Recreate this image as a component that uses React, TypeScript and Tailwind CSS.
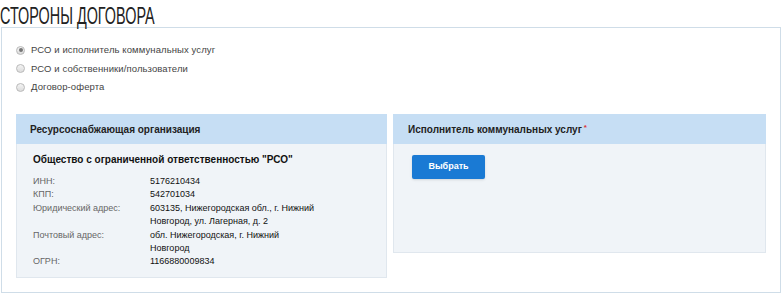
export default function App() {
  const rows = [
    { label: "ИНН:", value: "5176210434" },
    { label: "КПП:", value: "542701034" },
    { label: "Юридический адрес:", value: "603135, Нижегородская обл., г. Нижний Новгород, ул. Лагерная, д. 2" },
    { label: "Почтовый адрес:", value: "обл. Нижегородская, г. Нижний Новгород" },
    { label: "ОГРН:", value: "1166880009834" },
  ];
  const radios = [
    { text: "РСО и исполнитель коммунальных услуг", checked: true },
    { text: "РСО и собственники/пользователи", checked: false },
    { text: "Договор-оферта", checked: false },
  ];

  return (
    <div className="w-[782px] h-[294px] bg-white font-['Liberation_Sans',Arial,sans-serif] overflow-hidden">
      {/* Title */}
      <div className="h-[27px] flex items-start">
        <h1 className="inline-block origin-left scale-x-[0.6] text-[24px] leading-[31px] h-[27px] text-[#222] whitespace-nowrap">
          СТОРОНЫ ДОГОВОРА
        </h1>
      </div>

      {/* Box */}
      <div className="ml-[1px] w-[780px] h-[266px] border border-[#cfdde8] pt-[13px] pl-[14px] pr-[13px]">
        <div className="flex flex-col">
          {radios.map((r) => (
            <label key={r.text} className="h-[18.5px] flex items-center text-[9.5px] text-[#444] tracking-[0.1px]">
              <span className="w-[9px] h-[9px] rounded-full border border-[#b9b9b9] bg-gradient-to-b from-[#f4f4f4] to-[#dcdcdc] flex items-center justify-center mr-[6px]">
                {r.checked && <span className="w-[4px] h-[4px] rounded-full bg-[#777]" />}
              </span>
              {r.text}
            </label>
          ))}
        </div>

        <div className="mt-[17.5px] flex items-start gap-[6px]">
          {/* Left panel */}
          <div className="w-[371px]">
            <div className="h-[30px] bg-[#c6def4] flex items-center pl-[14px] text-[10px] font-bold text-[#222]">
              Ресурсоснабжающая организация
            </div>
            <div className="h-[134px] bg-[#f0f4f8] border border-t-0 border-[#e0e7ee] pt-[9px] pl-[16px]">
              <div className="text-[10px] leading-[14px] font-bold text-[#111]">
                Общество с ограниченной ответственностью "РСО"
              </div>
              <div className="mt-[8px] flex flex-col">
                {rows.map((row) => (
                  <div key={row.label} className="flex text-[9px] leading-[13.4px]">
                    <div className="w-[117px] text-[#666]">{row.label}</div>
                    <div className="w-[166px] text-[#111]">{row.value}</div>
                  </div>
                ))}
              </div>
            </div>
          </div>

          {/* Right panel */}
          <div className="w-[373px]">
            <div className="h-[30px] bg-[#c6def4] flex items-center pl-[15px] text-[10px] font-bold text-[#222]">
              Исполнитель коммунальных услуг
              <span className="text-[#d33] text-[8px] self-start mt-[8px] ml-[2px]">*</span>
            </div>
            <div className="h-[109px] bg-[#f0f4f8] border border-t-0 border-[#e0e7ee] pt-[8px] pl-[18px]">
              <button className="w-[73px] h-[24px] rounded-[2px] bg-[#1a7ad4] text-white text-[9px] font-bold shadow-sm">
                Выбрать
              </button>
            </div>
          </div>
        </div>
      </div>
    </div>
  );
}
